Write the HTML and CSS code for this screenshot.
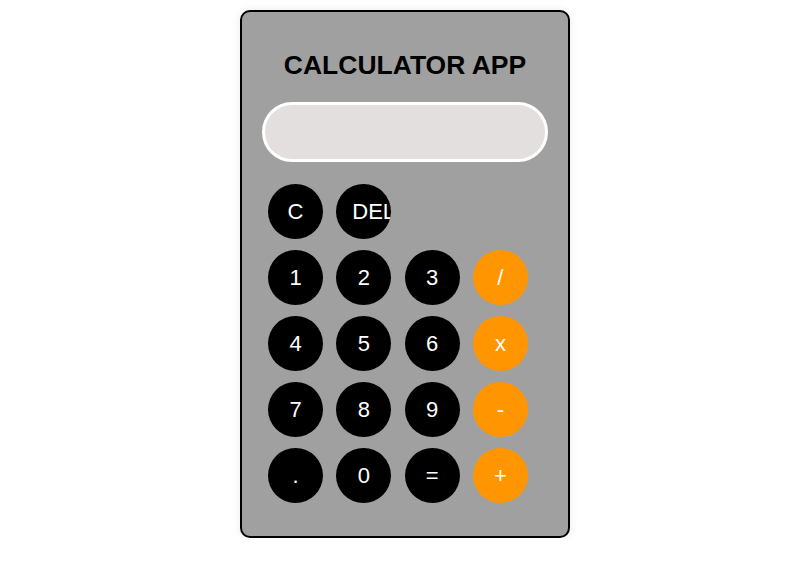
FILE: index.html
```html
<!DOCTYPE html>
<html>
<head>
<meta charset="utf-8">
<title>Calculator App</title>
<link rel="stylesheet" href="styles.css">
</head>
<body>
<div class="page">
  <div class="calculator">
    <h1 class="title">CALCULATOR APP</h1>
    <div class="display"></div>
    <div class="keys">
      <button class="key">C</button>
      <button class="key">DEL</button>
      <span class="spacer"></span>
      <span class="spacer"></span>
      <button class="key">1</button>
      <button class="key">2</button>
      <button class="key">3</button>
      <button class="key op">/</button>
      <button class="key">4</button>
      <button class="key">5</button>
      <button class="key">6</button>
      <button class="key op">x</button>
      <button class="key">7</button>
      <button class="key">8</button>
      <button class="key">9</button>
      <button class="key op">-</button>
      <button class="key">.</button>
      <button class="key">0</button>
      <button class="key">=</button>
      <button class="key op">+</button>
    </div>
  </div>
</div>
</body>
</html>
```
FILE: styles.css
```css
html, body {
  margin: 0;
  padding: 0;
  background: #ffffff;
  font-family: "Liberation Sans", Arial, sans-serif;
}

.page {
  display: flex;
  justify-content: center;
  padding: 10px 0 0 9px;
}

.calculator {
  width: 330px;
  height: 528px;
  box-sizing: border-box;
  background: #a0a0a0;
  border: 2px solid #000;
  border-radius: 10px;
  box-shadow: 0 0 10px rgba(0, 0, 0, 0.08);
  padding: 38px 20px 0 20px;
}

.title {
  margin: 0;
  font-size: 26.5px;
  font-weight: bold;
  text-align: center;
  color: #000;
  line-height: 30px;
}

.display {
  margin-top: 22px;
  height: 60px;
  box-sizing: border-box;
  border: 3px solid #fff;
  border-radius: 30px;
  background: #e3dfdf;
}

.keys {
  margin: 22px 0 0 6px;
  display: grid;
  grid-template-columns: repeat(4, 55px);
  grid-auto-rows: 55px;
  column-gap: 13.3px;
  row-gap: 11px;
}

.key {
  width: 55px;
  height: 55px;
  box-sizing: border-box;
  padding: 0 16px;
  border: none;
  border-radius: 50%;
  background: #000;
  color: #fff;
  font-family: "Liberation Sans", Arial, sans-serif;
  font-size: 22px;
  overflow: hidden;
  white-space: nowrap;
  text-align: center;
}

.key.op {
  background: #ff9500;
}
```
